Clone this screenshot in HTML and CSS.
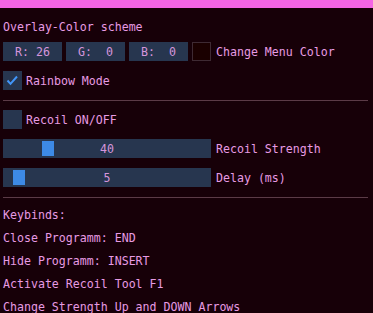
FILE: index.html
```html
<!DOCTYPE html>
<html lang="en">

<head>
    <meta charset="UTF-8">
    <meta name="viewport" content="width=device-width, initial-scale=1.0">
    <title>Overlay Menu</title>
    <link rel="stylesheet" href="styles.css">
</head>

<body>

    <div class="title-bar"></div>

    <div class="window">
        <div class="text">Overlay-Color scheme</div>

        <!-- Color editor -->
        <div class="row">
            <div class="color-inputs">
                <div class="frame num">R: 26</div>
                <div class="frame num">G:  0</div>
                <div class="frame num">B:  0</div>
                <div class="swatch"></div>
            </div>
            <span class="label">Change Menu Color</span>
        </div>

        <div class="row">
            <div class="frame checkbox">
                <svg width="19" height="19" viewBox="0 0 19 19">
                    <polyline points="4.5,9.5 7.5,12.8 14,5.5" fill="none" stroke="#4296fa" stroke-width="2" />
                </svg>
            </div>
            <span class="label">Rainbow Mode</span>
        </div>

        <hr class="separator">

        <div class="row">
            <div class="frame checkbox"></div>
            <span class="label">Recoil ON/OFF</span>
        </div>

        <!-- Sliders -->
        <div class="row">
            <div class="frame slider">
                <div class="grab" style="left: 39px;"></div>
                <span class="slider-value">40</span>
            </div>
            <span class="label">Recoil Strength</span>
        </div>

        <div class="row">
            <div class="frame slider">
                <div class="grab" style="left: 10px;"></div>
                <span class="slider-value">5</span>
            </div>
            <span class="label">Delay (ms)</span>
        </div>

        <hr class="separator">

        <div class="text">Keybinds:</div>
        <div class="text">Close Programm: END</div>
        <div class="text">Hide Programm: INSERT</div>
        <div class="text">Activate Recoil Tool F1</div>
        <div class="text">Change Strength Up and DOWN Arrows</div>
    </div>

</body>

</html>
```

FILE: styles.css
```css
body {
    margin: 0;
    padding: 0;
    width: 373px;
    height: 313px;
    overflow: hidden;
    background-color: #170008;
    font-family: "DejaVu Sans Mono", "Liberation Mono", monospace;
    font-size: 11.6px;
    color: #e79be3;
}

.title-bar {
    height: 8px;
    background-color: #f465e4;
}

.window {
    display: flex;
    flex-direction: column;
    gap: 10px;
    padding: 11px 5px 0 3px;
}

.text {
    height: 13px;
    line-height: 16px;
    white-space: pre;
}

.row {
    display: flex;
    align-items: center;
    gap: 5px;
    height: 19px;
}

.frame {
    height: 19px;
    background-color: #27364f;
    box-sizing: border-box;
}

.color-inputs {
    display: flex;
    gap: 4px;
}

.num {
    width: 59px;
    line-height: 20px;
    text-align: center;
    white-space: pre;
    color: #d595dc;
}

.swatch {
    width: 19px;
    height: 19px;
    box-sizing: border-box;
    background-color: #1a0000;
    border: 1px solid #3e2a33;
}

.label {
    line-height: 15px;
    padding-top: 1px;
    white-space: pre;
}

.checkbox {
    width: 19px;
    margin-right: -1px;
}

.checkbox svg {
    display: block;
}

.slider {
    position: relative;
    width: 208px;
    line-height: 20px;
    text-align: center;
}

.grab {
    position: absolute;
    top: 2px;
    width: 12px;
    height: 15px;
    background-color: #3d8ae6;
}

.slider-value {
    position: relative;
    color: #d595dc;
}

.separator {
    margin: 0 0 -1px 0;
    border: none;
    height: 1px;
    background-color: #5b3b47;
}
```
